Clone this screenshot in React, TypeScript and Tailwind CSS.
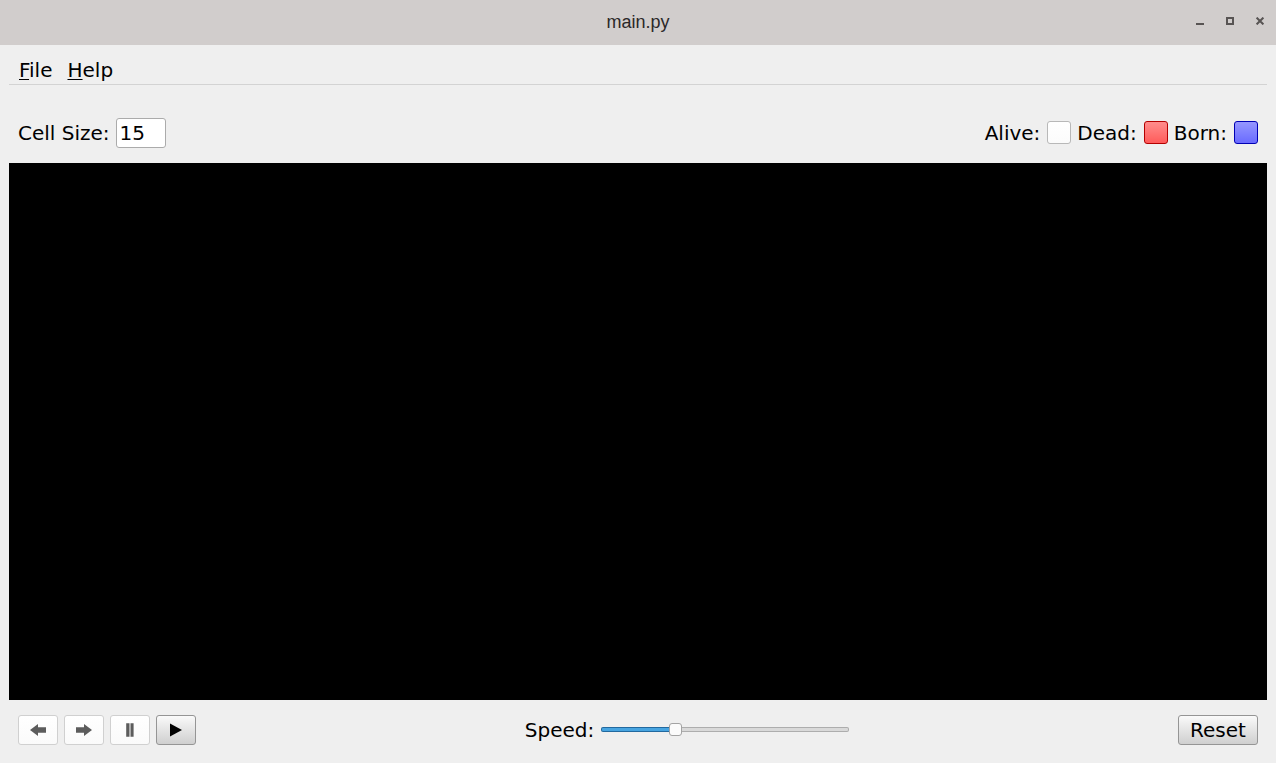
import { useState, type CSSProperties, type ReactNode } from "react";

const SPEED_MAX = 7;

function ColorSwatch({ id, label, className }: { id: string; label: string; className: string }) {
  return (
    <div className="flex items-start gap-[7px]">
      <label htmlFor={id}>{label}</label>
      <button id={id} type="button" className={`h-[23px] w-6 rounded-[3px] border bg-linear-to-b ${className}`} />
    </div>
  );
}

function ToolButton({ label, disabled, children }: { label: string; disabled?: boolean; children: ReactNode }) {
  return (
    <button
      type="button"
      aria-label={label}
      disabled={disabled}
      className="flex h-[30px] w-10 items-center justify-center rounded-[3px] border border-[#959595] bg-linear-to-b from-[#fafafa] to-[#cfcfcf] text-black disabled:border-[#d0d0d0] disabled:from-white disabled:to-[#fafafa] disabled:text-[#5c5c5c]"
    >
      <svg width="16" height="16" viewBox="0 0 16 16" fill="currentColor" aria-hidden="true">
        {children}
      </svg>
    </button>
  );
}

function TitleBar() {
  return (
    <header className="grid h-[45px] shrink-0 grid-cols-[1fr_auto_1fr] items-center bg-[#d1cdcc] px-2.5 pb-1 text-[#2b2828]">
      <h1 className="col-start-2 pt-0.5 font-['Liberation_Sans',sans-serif] text-lg leading-6">main.py</h1>
      <div className="flex justify-end gap-3.5 text-[#585453]">
        <button type="button" aria-label="Minimize" className="flex size-4 items-center justify-center">
          <svg width="8" height="8" viewBox="0 0 8 8" fill="currentColor">
            <rect y="6" width="8" height="2" />
          </svg>
        </button>
        <button type="button" aria-label="Maximize" className="flex size-4 items-center justify-center">
          <svg width="8" height="8" viewBox="0 0 8 8" fill="none" stroke="currentColor" strokeWidth="2">
            <rect x="1" y="1" width="6" height="6" />
          </svg>
        </button>
        <button type="button" aria-label="Close" className="-mr-0.5 flex size-4 items-center justify-center">
          <svg width="8" height="8" viewBox="0 0 8 8" fill="none" stroke="currentColor" strokeWidth="2">
            <path d="M.6.6 7.4 7.4M7.4.6.6 7.4" />
          </svg>
        </button>
      </div>
    </header>
  );
}

export default function App() {
  const [cellSize, setCellSize] = useState("15");
  const [speed, setSpeed] = useState(2);
  const fill = { "--fill": `${(speed / SPEED_MAX) * 100}%` } as CSSProperties;

  return (
    <div className="flex min-h-screen flex-col bg-[#efefef] font-['DejaVu_Sans',sans-serif] text-xl leading-6 text-black">
      <TitleBar />
      <main className="flex flex-1 flex-col px-[9px]">
        <nav className="flex gap-[15px] border-b border-[#d3d3d3] px-2.5 pt-[13px] pb-0.5">
          <button type="button">
            <span className="underline decoration-1 underline-offset-2">F</span>ile
          </button>
          <button type="button">
            <span className="underline decoration-1 underline-offset-2">H</span>elp
          </button>
        </nav>

        <div className="flex items-center justify-between px-[9px] pt-[33px] pb-[15px]">
          <div className="flex items-center gap-1.5">
            <label htmlFor="cell-size">Cell Size:</label>
            <input
              id="cell-size"
              type="text"
              value={cellSize}
              onChange={(e) => setCellSize(e.target.value)}
              className="h-[30px] w-[50px] rounded-[3px] border border-[#ababab] bg-white px-[3px] outline-none"
            />
          </div>
          <div className="flex items-center gap-1.5">
            <ColorSwatch id="alive" label="Alive:" className="border-[#b8b8b8] from-white to-[#fbfbfb]" />
            <ColorSwatch id="dead" label="Dead:" className="border-[#b40000] from-[#ff8c8c] to-[#ff5a5a]" />
            <ColorSwatch id="born" label="Born:" className="border-[#0000b4] from-[#9696ff] to-[#6a6aff]" />
          </div>
        </div>

        <canvas aria-label="Cell grid" className="min-h-0 w-full flex-1 basis-0 bg-black" />

        <div className="flex items-center justify-between px-[9px] pt-[15px] pb-[18px]">
          <div className="flex gap-1.5">
            <ToolButton label="Previous" disabled>
              <path d="M0 8 8 2V5.3H16V10.7H8V14Z" />
            </ToolButton>
            <ToolButton label="Next" disabled>
              <path d="M16 8 8 2V5.3H0V10.7H8V14Z" />
            </ToolButton>
            <ToolButton label="Pause" disabled>
              <path d="M4.2 1.2H7.5V14.8H4.2ZM8.5 1.2H11.6V14.8H8.5Z" />
            </ToolButton>
            <ToolButton label="Play">
              <path d="M2 1.5 14 8 2 14.5Z" />
            </ToolButton>
          </div>
          <div className="flex items-center gap-[7px]">
            <label htmlFor="speed">Speed:</label>
            <input
              id="speed"
              type="range"
              min={0}
              max={SPEED_MAX}
              value={speed}
              onChange={(e) => setSpeed(Number(e.target.value))}
              style={fill}
              className="mb-px h-[13px] w-[248px] appearance-none bg-transparent [&::-webkit-slider-runnable-track]:h-[5px] [&::-webkit-slider-runnable-track]:rounded-[2px] [&::-webkit-slider-runnable-track]:border [&::-webkit-slider-runnable-track]:border-transparent [&::-webkit-slider-runnable-track]:[background:linear-gradient(to_right,#47a4e0_var(--fill),#d9d9d9_var(--fill))_padding-box,linear-gradient(to_right,#22699f_var(--fill),#adadad_var(--fill))_border-box] [&::-webkit-slider-thumb]:-mt-[5px] [&::-webkit-slider-thumb]:size-[13px] [&::-webkit-slider-thumb]:appearance-none [&::-webkit-slider-thumb]:rounded-[3px] [&::-webkit-slider-thumb]:border [&::-webkit-slider-thumb]:border-[#a3a3a3] [&::-webkit-slider-thumb]:bg-[#fbfbfb]"
            />
          </div>
          <button
            type="button"
            className="h-[30px] w-20 rounded-[3px] border border-[#959595] bg-linear-to-b from-[#fafafa] to-[#cfcfcf]"
          >
            Reset
          </button>
        </div>
      </main>
    </div>
  );
}
